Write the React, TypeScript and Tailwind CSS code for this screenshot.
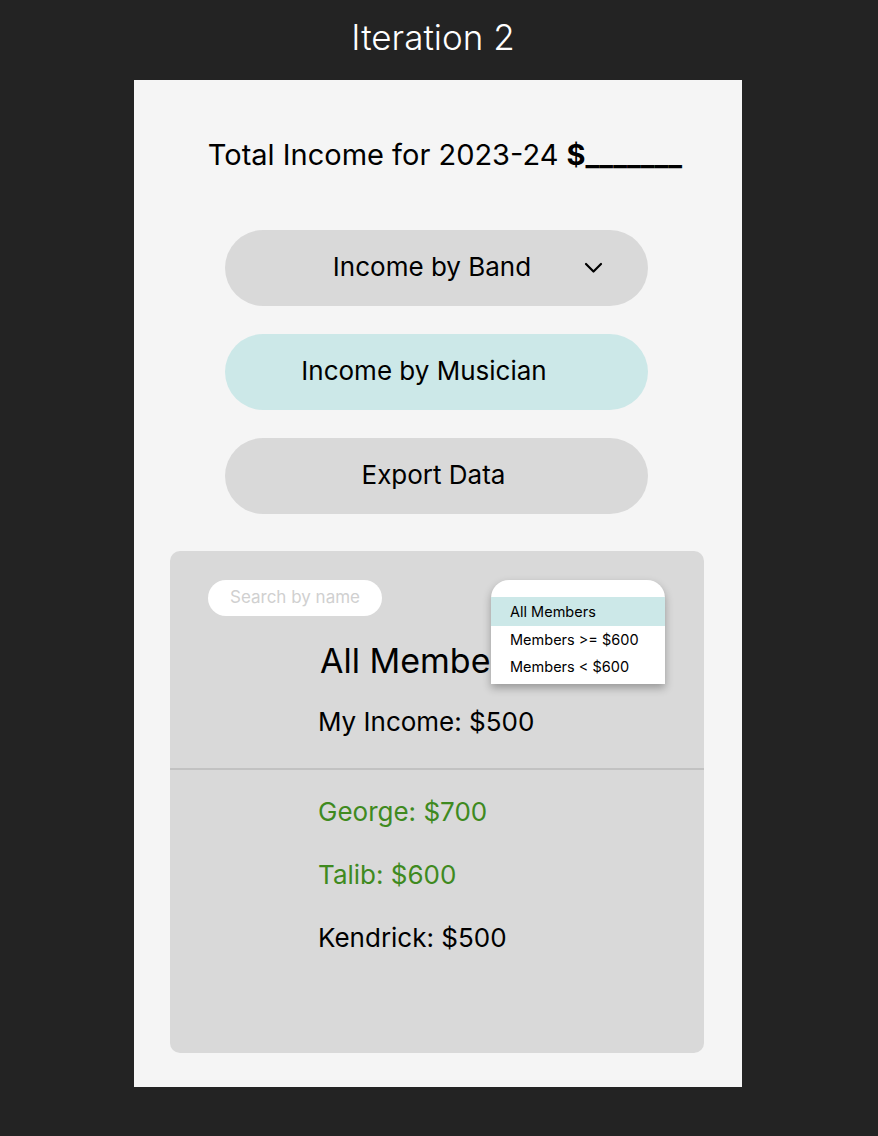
const MEMBERS = [
  { name: 'George', amount: 700 },
  { name: 'Talib', amount: 600 },
  { name: 'Kendrick', amount: 500 },
]

const FILTERS = ['All Members', 'Members >= $600', 'Members < $600']

function Chevron() {
  return (
    <svg
      width="19"
      height="12"
      viewBox="0 0 19 12"
      fill="none"
      stroke="currentColor"
      strokeWidth="2.2"
      strokeLinecap="round"
      strokeLinejoin="round"
      className="absolute right-[45px] top-[32px]"
    >
      <path d="M2 2l7.5 7.5L17 2" />
    </svg>
  )
}

export default function App() {
  return (
    <div className="min-h-[1136px] w-[878px] bg-[#232323] font-['Inter','Noto_Sans',sans-serif]">
      <div className="flex h-[80px] items-start justify-center pt-[17px] pr-[12px]">
        <h1 className="text-[35px] leading-[40px] font-light text-white">Iteration 2</h1>
      </div>

      <div className="ml-[134px] flex w-[608px] flex-col bg-[#f5f5f5] pt-[58px] pb-[34px]">
        <p className="text-center text-[29px] leading-[34px] text-black pl-[14px]">
          Total Income for 2023-24 <span className="font-bold">$_______</span>
        </p>

        <div className="mt-[58px] ml-[91px] flex w-[423px] flex-col gap-[28px]">
          <button className="relative flex h-[76px] items-center justify-center rounded-full bg-[#d9d9d9] pr-[9px] pb-[4px] text-[26px] text-black">
            Income by Band
            <Chevron />
          </button>
          <button className="flex h-[76px] items-center justify-center rounded-full bg-[#cce8e8] pr-[25px] pb-[4px] text-[26px] text-black">
            Income by Musician
          </button>
          <button className="flex h-[76px] items-center justify-center rounded-full bg-[#d9d9d9] pr-[6px] pb-[4px] text-[26px] text-black">
            Export Data
          </button>
        </div>

        <div className="relative mt-[37px] ml-[36px] h-[502px] w-[534px] rounded-[10px] bg-[#d9d9d9]">
          <div className="pt-[29px] pl-[38px]">
            <div className="flex h-[36px] w-[174px] items-center rounded-full bg-white pl-[22px] text-[17px] text-[#d0d0d0]">
              Search by name
            </div>
          </div>

          <div className="pl-[150px] mt-[24px] text-[34px] leading-[42px] text-black">All Members</div>
          <div className="pl-[148px] mt-[24px] text-[26px] leading-[32px] text-black">My Income: $500</div>

          <div className="mt-[30px] h-[2px] bg-[#c2c2c2]" />

          <div className="mt-[26px] flex flex-col gap-[31px] pl-[148px]">
            {MEMBERS.map((m) => (
              <div
                key={m.name}
                className={
                  m.amount >= 600
                    ? 'text-[26px] leading-[32px] text-[#3f8a1f]'
                    : 'text-[26px] leading-[32px] text-black'
                }
              >
                {m.name}: ${m.amount}
              </div>
            ))}
          </div>

          <div className="absolute left-[321px] top-[29px] w-[174px] rounded-t-[18px] bg-white pt-[17px] pb-[4px] shadow-[0_4px_8px_rgba(0,0,0,0.3)]">
            {FILTERS.map((f, i) => (
              <div
                key={f}
                className={
                  i === 0
                    ? 'flex h-[29px] items-center bg-[#cce8e8] pl-[19px] text-[14.5px] text-black'
                    : 'flex h-[27px] items-center pl-[19px] text-[14.5px] text-black'
                }
              >
                {f}
              </div>
            ))}
          </div>
        </div>
      </div>
    </div>
  )
}
